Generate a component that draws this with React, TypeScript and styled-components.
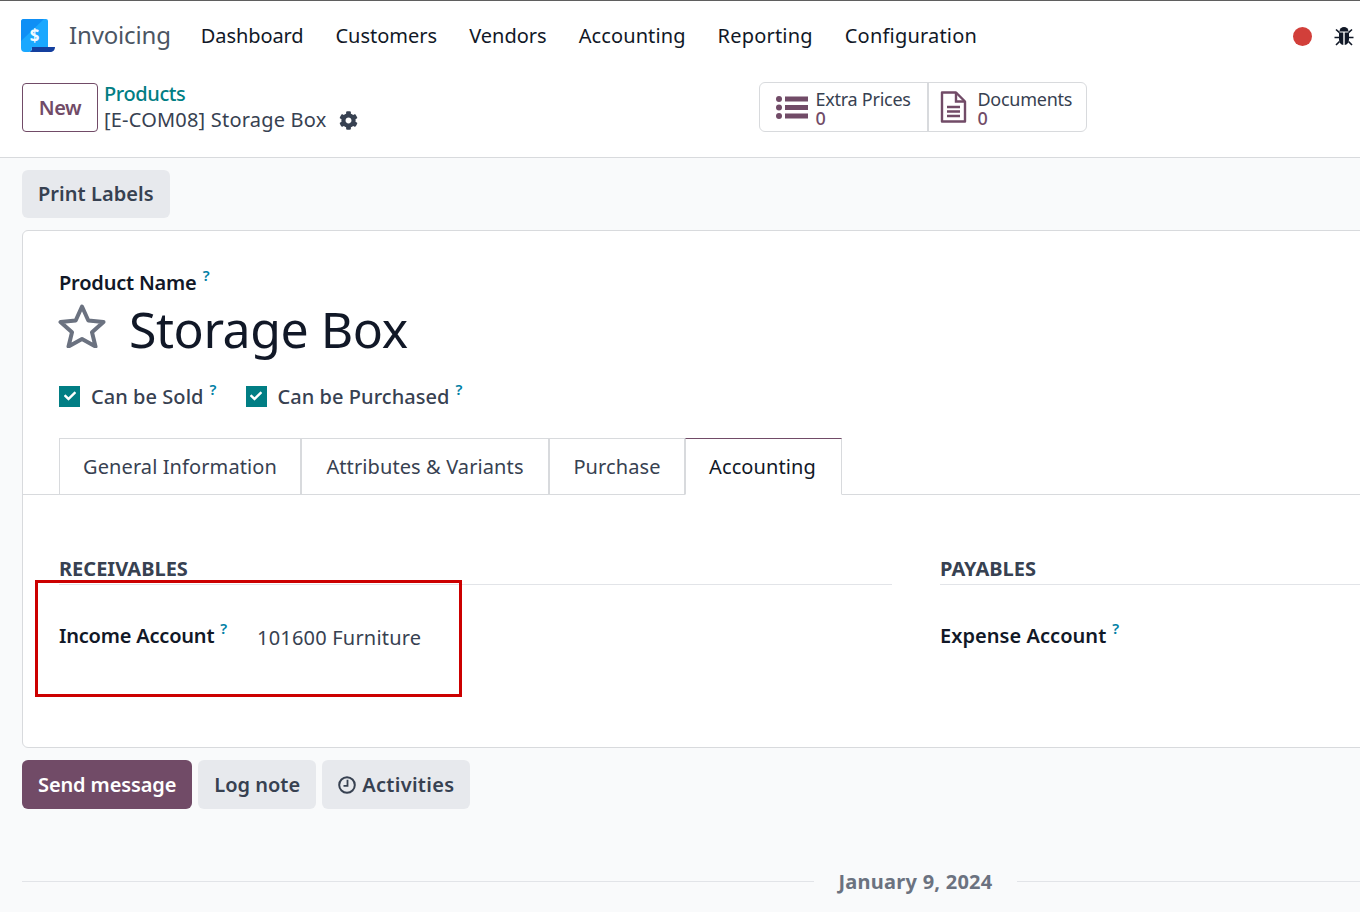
import React from 'react';
import styled, { createGlobalStyle } from 'styled-components';
import { FaCog, FaCheck } from 'react-icons/fa';

const Global = createGlobalStyle`
  html, body { margin: 0; padding: 0; height: 100%; background: #f9fafb; }
  body { font-family: "Noto Sans", "Open Sans", sans-serif; color: #374151; overflow: hidden; }
  * { box-sizing: border-box; }
`;

const Page = styled.div`
  width: 1360px; height: 912px; overflow: hidden; position: relative;
  display: flex; flex-direction: column; background: #f9fafb;
  border-top: 1px solid #5f5f5f;
`;
const Head = styled.header`background: #fff; border-bottom: 1px solid #d8dadd; height: 157px; flex: none;`;
const NavBar = styled.nav`
  height: 70px; display: flex; align-items: center; padding: 0 0 0 21px; width: 1400px;
`;
const AppName = styled.span`
  font-size: 24px; color: #4b5563; margin-left: 14px; margin-right: 30px; letter-spacing: -0.15px; line-height: 1; position: relative; top: -1px;
`;
const NavItem = styled.span<{ $ls: number }>`
  font-size: 20px; color: #111827; margin-right: 32px; letter-spacing: ${p => p.$ls}px; line-height: 1;
`;
const NavRight = styled.div`
  display: flex; align-items: center; gap: 22px; margin-left: 284px;
`;
const RedDot = styled.span`width: 19px; height: 19px; border-radius: 50%; background: #d23f3a; display: block;`;
const Control = styled.div`display: flex; align-items: flex-start; padding: 12px 0 0 22px;`;
const NewBtn = styled.button`
  width: 76px; height: 49px; border: 1px solid #714b67; border-radius: 4px; background: #fff;
  color: #714b67; font: 600 20px "Noto Sans", sans-serif; letter-spacing: -0.4px; padding: 0;
`;
const Crumbs = styled.div`margin-left: 6px; margin-top: -2px; display: flex; flex-direction: column; font-size: 20px; line-height: 26px;`;
const CrumbLink = styled.span`color: #017e84; font-weight: 500; letter-spacing: -0.4px;`;
const CrumbCurrent = styled.span`color: #374151; display: flex; align-items: center; gap: 13px; letter-spacing: 0.2px;`;
const Stats = styled.div`
  display: flex; margin-left: 401px; margin-top: -1px; height: 50px; border: 1px solid #d8dadd; border-radius: 6px; background: #fff;
`;
const Stat = styled.div<{ $w: number; $pad: number; $gap: number }>`
  width: ${p => p.$w}px; display: flex; align-items: center; padding-left: ${p => p.$pad}px; gap: ${p => p.$gap}px;
  & + & { border-left: 2px solid #d8dadd; }
`;
const StatText = styled.div`display: flex; flex-direction: column; font-size: 18px; line-height: 19px; color: #374151; letter-spacing: -0.25px; margin-top: 3px;`;
const StatValue = styled.span`color: #714b67; font-weight: 500;`;
const Body = styled.main`padding: 12px 0 0 22px; flex: 1;`;
const GreyBtn = styled.button`
  height: 49px; border: 0; border-radius: 6px; background: #e7e9ed; color: #374151;
  font: 600 20px "Noto Sans", sans-serif; letter-spacing: 0; padding: 0 16px; display: inline-flex; align-items: center; gap: 6px;
`;
const PrintBtn = styled(GreyBtn)`height: 48px; display: flex; letter-spacing: 0.05px; padding-bottom: 2px;`;
const ActivitiesText = styled.span`letter-spacing: 0.3px;`;
const Sheet = styled.section`
  margin-top: 12px; width: 1800px; height: 518px; background: #fff; border: 1px solid #d8dadd; border-radius: 6px;
  padding-top: 38px; position: relative;
`;
const Title = styled.div`padding-left: 36px;`;
const Label = styled.span`
  font-size: 20px; font-weight: 600; color: #111827; letter-spacing: -0.2px; line-height: 28px;
`;
const WideLabel = styled(Label)`letter-spacing: 0.05px;`;
const Help = styled.sup`
  color: #0180a5; font-size: 15px; font-weight: 600; margin-left: 6px; line-height: 1; position: relative; top: -1px; vertical-align: super;
`;
const NameRow = styled.div`display: flex; align-items: center; height: 58px; margin-top: -1px; margin-left: -1px; gap: 23px;`;
const ProductName = styled.h1`
  margin: 8px 0 0; font-size: 50px; font-weight: 400; color: #111827; letter-spacing: -0.45px; line-height: 58px;
`;
const Checks = styled.div`display: flex; gap: 29px; margin-top: 27px; height: 30px; align-items: center;`;
const Check = styled.label`
  display: flex; align-items: center; gap: 11px; font-size: 20px; font-weight: 500; color: #374151; letter-spacing: 0.05px;
`;
const Box = styled.span`
  width: 21px; height: 21px; background: #017e84; color: #fff; display: flex; align-items: center; justify-content: center;
`;
const Tabs = styled.div`
  display: flex; padding-left: 36px; margin-top: 27px; height: 57px; border-bottom: 1px solid #d8dadd;
`;
const Tab = styled.div<{ $w: number; $active?: boolean }>`
  width: ${p => p.$w}px; height: 57px; display: flex; align-items: center; justify-content: center;
  font-size: 20px; letter-spacing: 0.1px; background: #fff;
  padding-right: ${p => (p.$active ? 2 : 0)}px;
  color: ${p => (p.$active ? '#111827' : '#374151')};
  border: 1px solid #d8dadd;
  border-top-color: ${p => (p.$active ? '#714b67' : '#d8dadd')};
  border-bottom-color: ${p => (p.$active ? '#fff' : '#d8dadd')};
`;
const Columns = styled.div`display: grid; grid-template-columns: 833px 833px; column-gap: 48px; padding: 60px 0 0 36px;`;
const SectionTitle = styled.h2`
  margin: 0; font-size: 20px; line-height: 27px; font-weight: 700; color: #374151; letter-spacing: 0; border-bottom: 1px solid #e2e4e8; height: 30px;
`;
const Field = styled.div`display: flex; align-items: flex-start; padding-top: 37px;`;
const FieldLabel = styled.div`width: 198px; line-height: 30px;`;
const FieldValue = styled.div`font-size: 20px; line-height: 30px; color: #374151; letter-spacing: 0.2px; margin-top: 1px;`;
const Highlight = styled.div`
  position: absolute; left: 12px; top: 349px; width: 427px; height: 117px; border: 3px solid #cc0000;
`;
const Chatter = styled.div`display: flex; gap: 6px; margin-top: 12px;`;
const PrimaryBtn = styled(GreyBtn)`background: #714b67; color: #fff; letter-spacing: -0.12px;`;
const DateRow = styled.div`display: flex; align-items: center; margin-top: 59px; width: 1500px;`;
const Rule = styled.span<{ $w: number }>`display: block; width: ${p => p.$w}px; height: 1px; margin-top: -2px; background: #e2e4e8;`;
const DateText = styled.span`
  font-size: 20px; font-weight: 700; color: #6b7280; width: 203px; text-align: center; letter-spacing: 0.25px; line-height: 28px;
`;

const Logo = () => (
  <svg width="34" height="34" viewBox="0 0 34 34">
    <path d="M22 33H8c3-1 3-3 3-5h23c0 3-2 5-5 5z" fill="#143F9E" />
    <path d="M0 3a3 3 0 0 1 3-3h22a2 2 0 0 1 2 2v26H11c0 3-1 5-4 5H4a4 4 0 0 1-4-4z" fill="#1AA8FF" />
    <path d="M0 3a3 3 0 0 1 3-3h20L0 22z" fill="#0F8FF5" />
    <text x="13.500" y="23" textAnchor="middle" fontFamily="Noto Sans" fontWeight="700" fontSize="17" fill="#f2faff">$</text>
  </svg>
);
const BugIcon = () => (
  <svg width="20" height="20" viewBox="0 0 20 20" fill="#111827">
    <path d="M5.500 5.500a4.500 4.500 0 0 1 9 0z" />
    <path d="M5 6.500h4.300V19C6.800 18.700 5 16.500 5 13.500zM10.700 6.500H15v7c0 3-1.800 5.200-4.300 5.500z" />
    <path d="M2 3.500l3.500 3.200M18 3.500l-3.500 3.200M0.500 11.500H5M19.500 11.500H15M2 19l3.500-3.500M18 19l-3.500-3.500" stroke="#111827" strokeWidth="1.600" fill="none" />
  </svg>
);
const ClockIcon = () => (
  <svg width="18" height="18" viewBox="0 0 18 18" fill="none" stroke="currentColor" strokeWidth="2">
    <circle cx="9" cy="9" r="7.800" />
    <path d="M9.500 3.800V9.800H5.500" strokeWidth="1.800" />
  </svg>
);
const ListIcon = () => (
  <svg width="32" height="25" viewBox="0 0 32 25" fill="#714b67">
    <circle cx="3" cy="4" r="3" /><circle cx="3" cy="12.500" r="3" /><circle cx="3" cy="21" r="3" />
    <rect x="9" y="1.500" width="23" height="5" /><rect x="9" y="10" width="23" height="5" /><rect x="9" y="18.500" width="23" height="5" />
  </svg>
);
const DocIcon = () => (
  <svg width="27" height="32" viewBox="0 0 27 32" fill="none" stroke="#714b67" strokeWidth="2.400">
    <path d="M2 1.500h14l9 9v20H2z" strokeLinejoin="round" />
    <path d="M16 1.500v9h9" />
    <path d="M7 16h13M7 20.500h13M7 25h13" />
  </svg>
);
const Star = () => (
  <svg width="48" height="46" viewBox="0 0 48 46" fill="none" stroke="#6b7280" strokeWidth="4" strokeLinejoin="round">
    <path d="M24 4.500l6.300 14 15.200 1.500-11.500 10.200 3.500 14.300-13.500-7.500-13.500 7.500 3.500-14.300L2.500 20l15.200-1.500z" />
  </svg>
);

const Tick = () => <Box><FaCheck size={12} /></Box>;

const NAV: [string, number][] = [
  ['Dashboard', -0.1], ['Customers', 0], ['Vendors', 0], ['Accounting', 0.1], ['Reporting', 0.2], ['Configuration', 0.2],
];

export default function App() {
  return (
    <Page>
      <Global />
      <Head>
        <NavBar>
          <Logo />
          <AppName>Invoicing</AppName>
          {NAV.map(([t, ls]) => (
            <NavItem key={t} $ls={ls}>{t}</NavItem>
          ))}
          <NavRight>
            <RedDot />
            <BugIcon />
          </NavRight>
        </NavBar>
        <Control>
          <NewBtn>New</NewBtn>
          <Crumbs>
            <CrumbLink>Products</CrumbLink>
            <CrumbCurrent>[E-COM08] Storage Box <FaCog size={19} /></CrumbCurrent>
          </Crumbs>
          <Stats>
            <Stat $w={167} $pad={16} $gap={7}><ListIcon /><StatText>Extra Prices<StatValue>0</StatValue></StatText></Stat>
            <Stat $w={159} $pad={11} $gap={10}><DocIcon /><StatText>Documents<StatValue>0</StatValue></StatText></Stat>
          </Stats>
        </Control>
      </Head>
      <Body>
        <PrintBtn>Print Labels</PrintBtn>
        <Sheet>
          <Title>
            <Label>Product Name<Help>?</Help></Label>
            <NameRow><Star /><ProductName>Storage Box</ProductName></NameRow>
            <Checks>
              <Check><Tick /><span>Can be Sold<Help>?</Help></span></Check>
              <Check><Tick /><span>Can be Purchased<Help>?</Help></span></Check>
            </Checks>
          </Title>
          <Tabs>
            <Tab $w={242}>General Information</Tab>
            <Tab $w={248}>Attributes &amp; Variants</Tab>
            <Tab $w={136}>Purchase</Tab>
            <Tab $w={157} $active>Accounting</Tab>
          </Tabs>
          <Columns>
            <div>
              <SectionTitle>RECEIVABLES</SectionTitle>
              <Field>
                <FieldLabel><Label>Income Account<Help>?</Help></Label></FieldLabel>
                <FieldValue>101600 Furniture</FieldValue>
              </Field>
            </div>
            <div>
              <SectionTitle>PAYABLES</SectionTitle>
              <Field>
                <FieldLabel><WideLabel>Expense Account<Help>?</Help></WideLabel></FieldLabel>
              </Field>
            </div>
          </Columns>
          <Highlight />
        </Sheet>
        <Chatter>
          <PrimaryBtn>Send message</PrimaryBtn>
          <GreyBtn>Log note</GreyBtn>
          <GreyBtn><ClockIcon /><ActivitiesText>Activities</ActivitiesText></GreyBtn>
        </Chatter>
        <DateRow>
          <Rule $w={792} />
          <DateText>January 9, 2024</DateText>
          <Rule $w={400} />
        </DateRow>
      </Body>
    </Page>
  );
}
